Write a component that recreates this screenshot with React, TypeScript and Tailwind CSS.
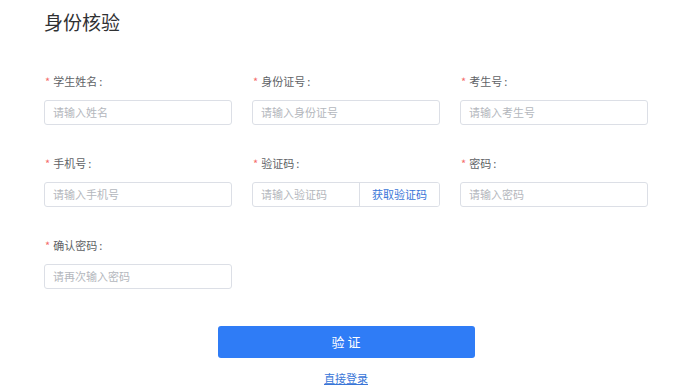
import React from "react";

type Field = {
  label: string;
  placeholder: string;
  code?: boolean;
};

const fields: Field[] = [
  { label: "学生姓名", placeholder: "请输入姓名" },
  { label: "身份证号", placeholder: "请输入身份证号" },
  { label: "考生号", placeholder: "请输入考生号" },
  { label: "手机号", placeholder: "请输入手机号" },
  { label: "验证码", placeholder: "请输入验证码", code: true },
  { label: "密码", placeholder: "请输入密码" },
  { label: "确认密码", placeholder: "请再次输入密码" },
];

const FormItem = ({ field }: { field: Field }) => {
  return (
    <div className="flex flex-col">
      <label className="flex items-center h-4 text-[11px] leading-4 text-[#606266]">
        <span className="text-[#f56c6c] mr-[3px] ml-[1px]">*</span>
        {field.label}
        <span className="ml-[2px]">:</span>
      </label>
      <div className="mt-[11px] flex h-[25px] rounded-[3px] border border-[#dcdfe6] bg-white overflow-hidden">
        <input
          placeholder={field.placeholder}
          className="min-w-0 flex-1 px-[8px] text-[11px] text-[#606266] outline-none placeholder:text-[#b4b7bd]"
        />
        {field.code && (
          <button className="w-[80px] shrink-0 border-l border-[#dcdfe6] bg-white text-[11px] text-[#3a76d8]">
            获取验证码
          </button>
        )}
      </div>
    </div>
  );
};

const App = () => {
  return (
    <div
      className="w-[692px] h-[392px] bg-white px-[44px] overflow-hidden"
      style={{ fontFamily: '"Noto Sans CJK SC", "Noto Sans", sans-serif' }}
    >
      <h1 className="pt-[8px] text-[19px] leading-[28px] text-[#303133]">
        身份核验
      </h1>

      <div className="mt-[37px] grid grid-cols-3 gap-x-5 gap-y-[30px]">
        {fields.map((f) => (
          <FormItem key={f.label} field={f} />
        ))}
      </div>

      <div className="mt-[37px] flex flex-col items-center">
        <button className="w-[257px] h-[32px] rounded-[3px] bg-[#2f7cf6] text-[13px] text-white">
          验 证
        </button>
        <a className="mt-[12px] text-[11px] leading-4 text-[#3a76d8] underline cursor-pointer">
          直接登录
        </a>
      </div>
    </div>
  );
};

export default App;
